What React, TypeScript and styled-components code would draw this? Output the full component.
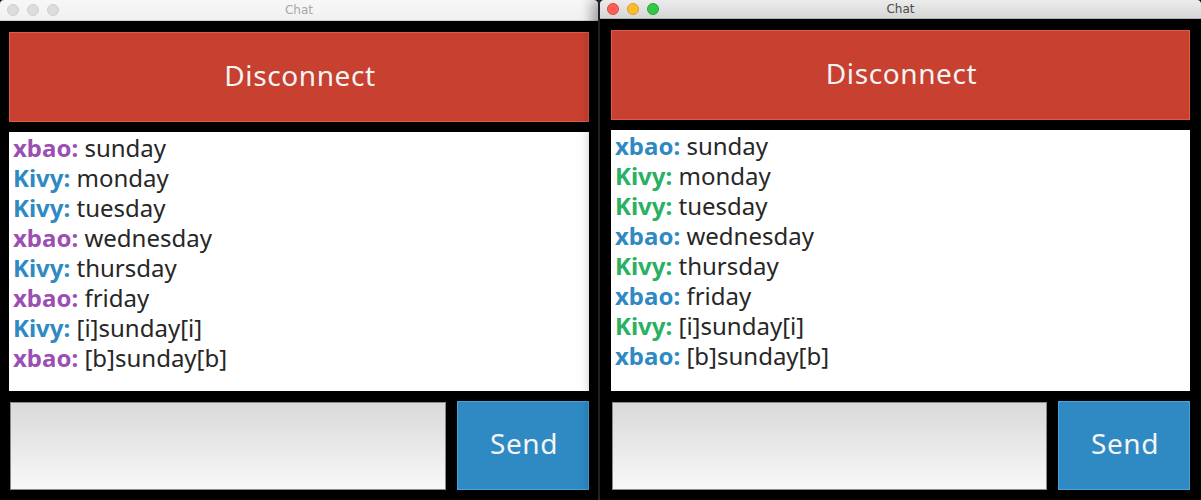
import React from "react";
import styled, { createGlobalStyle } from "styled-components";

const GlobalStyle = createGlobalStyle`
  html, body {
    margin: 0;
    padding: 0;
    background: #000;
    overflow: hidden;
  }
  body {
    font-family: "Noto Sans", "Open Sans", sans-serif;
  }
`;

const Desktop = styled.div`
  display: flex;
  width: 1201px;
  height: 500px;
  background: #000;
`;

const Divider = styled.div`
  width: 2px;
  background: #2b3038;
  flex: none;
`;

const Window = styled.div<{ $w: number; $active?: boolean }>`
  width: ${(p) => p.$w}px;
  flex: none;
  height: 500px;
  display: flex;
  flex-direction: column;
  background: #000;
  position: relative;
  z-index: ${(p) => (p.$active ? 2 : 1)};
  box-shadow: ${(p) => (p.$active ? "-8px 0 12px rgba(0,0,0,0.35)" : "none")};
`;

const TitleBar = styled.div<{ $active?: boolean; $h: number }>`
  height: ${(p) => p.$h}px;
  flex: none;
  box-sizing: border-box;
  display: flex;
  align-items: center;
  justify-content: center;
  position: relative;
  background: ${(p) =>
    p.$active
      ? "linear-gradient(#ececec, #d6d6d6)"
      : "linear-gradient(#f7f7f7, #f1f1f1)"};
  border-bottom: 1px solid ${(p) => (p.$active ? "#b4b4b4" : "#d2d2d2")};
  border-top-left-radius: 4px;
  border-top-right-radius: 4px;
`;

const Title = styled.span<{ $active?: boolean }>`
  font-family: "DejaVu Sans", "Liberation Sans", sans-serif;
  font-size: 12px;
  color: ${(p) => (p.$active ? "#4a4a4a" : "#a8a8a8")};
`;

const Lights = styled.div`
  position: absolute;
  left: 7px;
  top: 50%;
  transform: translateY(-50%);
  display: flex;
  gap: 8px;
`;

const Light = styled.span<{ $c: string; $b: string }>`
  width: 12px;
  height: 12px;
  box-sizing: border-box;
  border-radius: 50%;
  background: ${(p) => p.$c};
  border: 1px solid ${(p) => p.$b};
`;

const Body = styled.div<{ $pad: string }>`
  flex: 1;
  display: flex;
  flex-direction: column;
  padding: ${(p) => p.$pad};
  gap: 10px;
  min-height: 0;
`;

const DisconnectButton = styled.button`
  height: 90px;
  flex: none;
  box-sizing: border-box;
  background: #c8402f;
  border: 1px solid #e05a44;
  color: #f4f4f4;
  font-family: "Noto Sans", "Open Sans", sans-serif;
  font-size: 28px;
  letter-spacing: 0.6px;
  padding: 0 0 4px 2px;
  cursor: pointer;
`;

const ChatLog = styled.div<{ $h: number }>`
  height: ${(p) => p.$h}px;
  flex: none;
  background: #fff;
  padding: 1px 4px 0 4px;
  box-sizing: border-box;
`;

const Line = styled.div`
  font-size: 24px;
  line-height: 30px;
  color: #272727;
  white-space: nowrap;
`;

const Nick = styled.span<{ $color: string }>`
  font-weight: 700;
  color: ${(p) => p.$color};
`;

const InputRow = styled.div`
  display: flex;
  gap: 11px;
  height: 89px;
  flex: none;
  align-items: stretch;
`;

const TextInput = styled.div`
  flex: 1;
  margin: 1px 0 0 1px;
  height: 88px;
  box-sizing: border-box;
  border: 1px solid #8a8a8a;
  background: linear-gradient(#d9d9d9, #f8f8f8);
`;

const SendButton = styled.button`
  width: 132px;
  flex: none;
  box-sizing: border-box;
  background: #2f8ac4;
  border: 1px solid #4aa3db;
  color: #f4f4f4;
  font-family: "Noto Sans", "Open Sans", sans-serif;
  font-size: 28px;
  letter-spacing: 0.6px;
  padding: 0 0 6px 2px;
`;

type Msg = { nick: "xbao" | "Kivy"; text: string };

const messages: Msg[] = [
  { nick: "xbao", text: "sunday" },
  { nick: "Kivy", text: "monday" },
  { nick: "Kivy", text: "tuesday" },
  { nick: "xbao", text: "wednesday" },
  { nick: "Kivy", text: "thursday" },
  { nick: "xbao", text: "friday" },
  { nick: "Kivy", text: "[i]sunday[i]" },
  { nick: "xbao", text: "[b]sunday[b]" },
];

type ChatProps = {
  width: number;
  active?: boolean;
  titleH: number;
  pad: string;
  chatH: number;
  colors: { xbao: string; Kivy: string };
};

function ChatWindow({ width, active, titleH, pad, chatH, colors }: ChatProps) {
  return (
    <Window $w={width} $active={active}>
      <TitleBar $active={active} $h={titleH}>
        <Lights>
          {active ? (
            <>
              <Light $c="#fc5f57" $b="#de4a42" />
              <Light $c="#fdbc2e" $b="#de9f22" />
              <Light $c="#33c748" $b="#26a934" />
            </>
          ) : (
            <>
              <Light $c="#dcdcdc" $b="#cfcfcf" />
              <Light $c="#dcdcdc" $b="#cfcfcf" />
              <Light $c="#dcdcdc" $b="#cfcfcf" />
            </>
          )}
        </Lights>
        <Title $active={active}>Chat</Title>
      </TitleBar>
      <Body $pad={pad}>
        <DisconnectButton>Disconnect</DisconnectButton>
        <ChatLog $h={chatH}>
          {messages.map((m, i) => (
            <Line key={i}>
              <Nick $color={colors[m.nick]}>{m.nick}:</Nick> {m.text}
            </Line>
          ))}
        </ChatLog>
        <InputRow>
          <TextInput />
          <SendButton>Send</SendButton>
        </InputRow>
      </Body>
    </Window>
  );
}

export default function App() {
  return (
    <>
      <GlobalStyle />
      <Desktop>
        <ChatWindow
          width={598}
          titleH={21}
          pad="11px 9px 0 9px"
          chatH={259}
          colors={{ xbao: "#9b4fb4", Kivy: "#2f89c2" }}
        />
        <Divider />
        <ChatWindow
          width={601}
          active
          titleH={19}
          pad="11px 11px 0 11px"
          chatH={261}
          colors={{ xbao: "#2f89c2", Kivy: "#2bb062" }}
        />
      </Desktop>
    </>
  );
}
